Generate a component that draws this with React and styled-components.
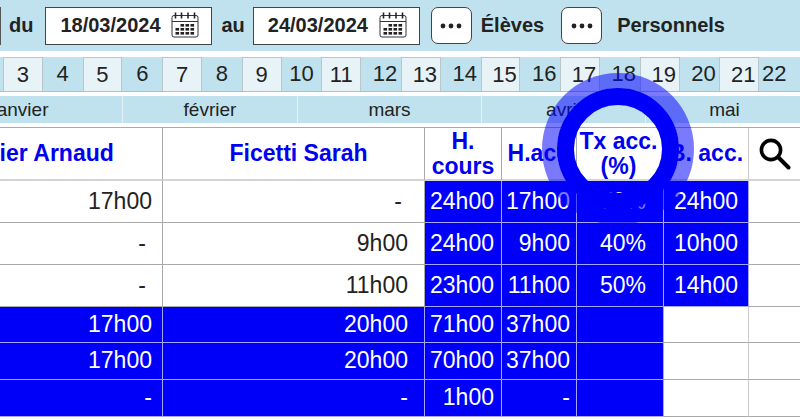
import styled, { createGlobalStyle } from "styled-components";

const Global = createGlobalStyle`
  * { box-sizing: border-box; }
  html, body { margin: 0; padding: 0; background: #fff; overflow: hidden; }
  body { font-family: "Liberation Sans", Arial, sans-serif; color: #222; }
`;

const Page = styled.div`
  position: relative;
  width: 800px;
  height: 419px;
  overflow: hidden;
`;

const Toolbar = styled.div`
  display: flex;
  align-items: center;
  height: 51px;
  background: #c0e2ee;
  font-size: 20px;
  font-weight: bold;
  white-space: nowrap;
`;

const Tick = styled.div`
  width: 1px;
  height: 38px;
  background: #555;
`;

const Label = styled.span`
  margin-left: ${(p) => p.$left}px;
`;

const DateBox = styled.div`
  display: flex;
  align-items: center;
  justify-content: space-between;
  width: 167px;
  height: 38px;
  margin-left: ${(p) => p.$left}px;
  padding: 0 12px 0 14px;
  background: #fff;
  border: 1px solid #444;
`;

const DotsButton = styled.div`
  display: flex;
  align-items: center;
  justify-content: center;
  width: 41px;
  height: 37px;
  margin-left: ${(p) => p.$left}px;
  background: #fff;
  border: 1px solid #444;
  border-radius: 7px;
`;

const Weeks = styled.div`
  display: flex;
  height: 35px;
  margin-top: 6px;
  margin-left: -36.8px;
  background: #c0e2ee;
  border-bottom: 1px solid #b4bec3;
`;

const Week = styled.div`
  flex: none;
  display: flex;
  align-items: center;
  justify-content: center;
  width: ${(p) => p.$width || 39.8}px;
  padding-left: ${(p) => (p.$shifted ? 8 : 0)}px;
  font-size: 22px;
  background: ${(p) => (p.$light ? "#e8f3f8" : "transparent")};
  border: ${(p) => (p.$light ? "1px solid #b9c7cd" : "none")};
  border-bottom: none;
`;

const Months = styled.div`
  display: flex;
  height: 27px;
  margin-top: 4px;
  margin-left: -81px;
  background: #c0e2ee;
`;

const Month = styled.div`
  flex: none;
  display: flex;
  align-items: center;
  justify-content: center;
  width: ${(p) => p.$width}px;
  font-size: 19px;
  border-right: 1px solid #e4f2f7;
`;

const Table = styled.table`
  table-layout: fixed;
  border-collapse: separate;
  border-spacing: 0;
  width: 912px;
  margin-top: 4px;
  margin-left: -111px;
  border-top: 1px solid #aaa;
`;

const Row = styled.tr`
  height: ${(p) => p.$height}px;
`;

const HeadCell = styled.th`
  padding: 0 ${(p) => p.$right || 0}px 0 ${(p) => p.$shift || 0}px;
  font-size: 23px;
  line-height: 25px;
  font-weight: bold;
  color: #0000f0;
  white-space: nowrap;
  background: #fff;
  border-right: 1px solid ${(p) => (p.$soft ? "#ccc" : "#aaa")};
  border-bottom: 2px solid #d4d4d4;
`;

const Cell = styled.td`
  padding: 0 ${(p) => p.$pad}px 1px 0;
  font-size: 23px;
  white-space: nowrap;
  text-align: ${(p) => p.$align || "right"};
  color: ${(p) => (p.$fill ? "#fff" : "#222")};
  background: ${(p) => (p.$fill ? "#0000fa" : "#fff")};
  border-right: 1px solid ${(p) => (p.$fill ? "#a6a6ff" : p.$soft ? "#ccc" : "#aaa")};
  border-bottom: 1px solid ${(p) => (p.$fill ? "#a6a6ff" : "#aaa")};
`;

const Ring = styled.div`
  position: absolute;
  left: 557px;
  top: 88px;
  width: 122px;
  height: 122px;
  border: 17px solid #0000fa;
  border-radius: 50%;
  box-shadow: 0 0 0 15px rgba(0, 0, 255, 0.52);
  pointer-events: none;
`;

const CalendarSvg = styled.svg`
  flex: none;
  margin-top: -2px;
`;

const CalendarIcon = () => (
  <CalendarSvg width="28" height="26" viewBox="0 0 28 26">
    <rect x="1" y="3.5" width="26" height="21.5" rx="2" fill="#fff" stroke="#333" strokeWidth="1" />
    <path d="M1 9.5H27" stroke="#333" strokeWidth="1" />
    {[4.5, 10.5, 17, 23.5].map((x) => (
      <path key={x} d="M0 0V6" transform={`translate(${x} 0.5)`} stroke="#222" strokeWidth="1.6" />
    ))}
    {[12, 16, 20].map((y, r) =>
      [4.5, 9.5, 14.5, 19.5].map((x, c) =>
        r === 0 && c === 0 ? null : (
          <rect key={`${x}-${y}`} x={x} y={y} width="3.6" height="2.6" fill="#222" />
        )
      )
    )}
  </CalendarSvg>
);

const DotsIcon = () => (
  <svg width="24" height="6" viewBox="0 0 24 6">
    <circle cx="4" cy="3" r="2.4" fill="#222" />
    <circle cx="12" cy="3" r="2.4" fill="#222" />
    <circle cx="20" cy="3" r="2.4" fill="#222" />
  </svg>
);

const SearchSvg = styled.svg`
  display: block;
  margin: 0 auto;
`;

const SearchIcon = () => (
  <SearchSvg width="32" height="32" viewBox="0 0 32 32">
    <circle cx="12" cy="12" r="9.6" fill="none" stroke="#000" strokeWidth="3.6" />
    <path d="M19.5 19.5L29.5 29.5" stroke="#000" strokeWidth="4" strokeLinecap="round" />
  </SearchSvg>
);

const weeks = [2, 3, 4, 5, 6, 7, 8, 9, 10, 11, 12, 13, 14, 15, 16, 17, 18, 19, 20, 21];

const months = [
  ["janvier", 204],
  ["février", 175],
  ["mars", 184],
  ["avril", 164],
  ["mai", 158],
];

const rows = [
  { height: 42, fillNames: false, values: ["17h00", "-", "24h00", "17h00", "70%", "24h00"] },
  { height: 42, fillNames: false, values: ["-", "9h00", "24h00", "9h00", "40%", "10h00"] },
  { height: 42, fillNames: false, values: ["-", "11h00", "23h00", "11h00", "50%", "14h00"] },
  { height: 36, fillNames: true, values: ["17h00", "20h00", "71h00", "37h00", "", ""] },
  { height: 37, fillNames: true, values: ["17h00", "20h00", "70h00", "37h00", "", ""] },
  { height: 37, fillNames: true, values: ["-", "-", "1h00", "-", "", ""] },
];

const pads = [10, 16, 7, 6, 17, 0];

export default function App() {
  return (
    <Page>
      <Global />
      <Toolbar>
        <Tick />
        <Label $left={8}>du</Label>
        <DateBox $left={12}>
          18/03/2024
          <CalendarIcon />
        </DateBox>
        <Label $left={9}>au</Label>
        <DateBox $left={8}>
          24/03/2024
          <CalendarIcon />
        </DateBox>
        <DotsButton $left={11}>
          <DotsIcon />
        </DotsButton>
        <Label $left={9}>Élèves</Label>
        <DotsButton $left={17}>
          <DotsIcon />
        </DotsButton>
        <Label $left={15}>Personnels</Label>
      </Toolbar>

      <Weeks>
        {weeks.map((n) => (
          <Week key={n} $light={n % 2 === 1} $shifted={n >= 12}>
            {n}
          </Week>
        ))}
        <Week $width={30}>22</Week>
      </Weeks>

      <Months>
        {months.map(([name, width]) => (
          <Month key={name} $width={width}>
            {name}
          </Month>
        ))}
      </Months>

      <Table>
        <colgroup>
          {[274, 262, 77, 75, 87, 85, 52].map((w) => (
            <col key={w} width={w} />
          ))}
        </colgroup>
        <tbody>
          <Row $height={53}>
            <HeadCell $shift={10}>Gautier Arnaud</HeadCell>
            <HeadCell $shift={10}>Ficetti Sarah</HeadCell>
            <HeadCell>
              H.
              <br />
              cours
            </HeadCell>
            <HeadCell $shift={5}>H.acc.</HeadCell>
            <HeadCell $soft $right={3}>
              Tx acc.
              <br />
              (%)
            </HeadCell>
            <HeadCell $soft>B. acc.</HeadCell>
            <HeadCell $soft>
              <SearchIcon />
            </HeadCell>
          </Row>
          {rows.map((row, r) => (
            <Row key={r} $height={row.height}>
              {row.values.map((value, c) => {
                const isFilled = c < 2 ? row.fillNames : c < 5 || !row.fillNames;
                const isDash = value === "-" && !isFilled;
                return (
                  <Cell
                    key={c}
                    $fill={isFilled}
                    $soft={c > 4}
                    $pad={isDash ? pads[c] + 6 : pads[c]}
                    $align={c === 5 ? "center" : "right"}
                  >
                    {value}
                  </Cell>
                );
              })}
              <Cell $soft />
            </Row>
          ))}
        </tbody>
      </Table>

      <Ring />
    </Page>
  );
}
